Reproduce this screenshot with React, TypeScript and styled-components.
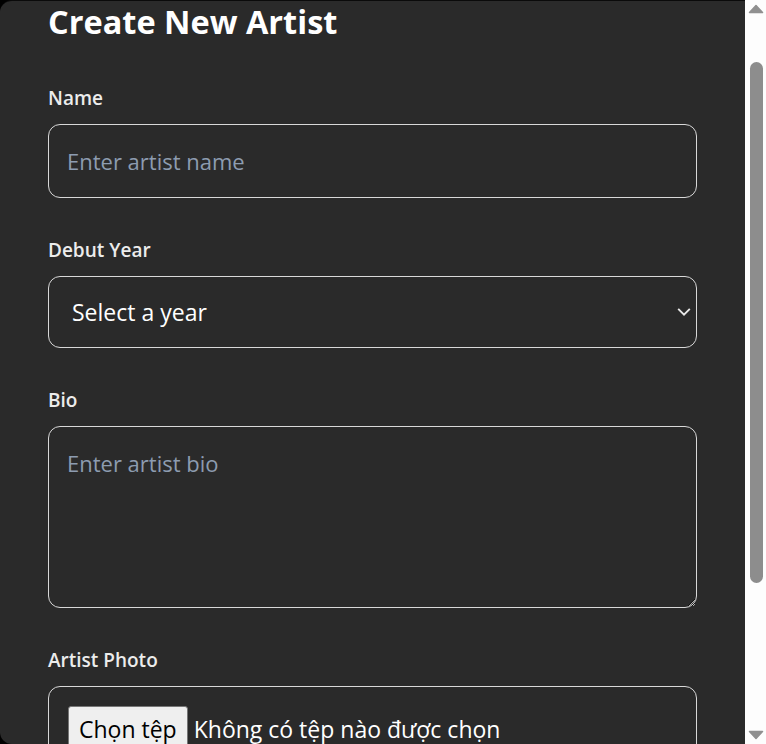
import React, { useLayoutEffect, useRef } from "react";
import styled, { createGlobalStyle } from "styled-components";

const Global = createGlobalStyle`
  html, body { margin: 0; padding: 0; background: #000; overflow: hidden; }
  * { box-sizing: border-box; }
`;

const Screen = styled.div`
  display: flex;
  width: 766px;
  height: 744px;
`;

const Panel = styled.div`
  flex: 1;
  height: 744px;
  overflow-y: auto;
  scrollbar-width: none;
  background: #2a2a2a;
  border-top: 1px solid #0a0a0a;
  border-radius: 12px 0 0 12px;
  font-family: "Open Sans", "Noto Sans", sans-serif;
  color: #fff;
  &::-webkit-scrollbar { display: none; }
`;

const Rail = styled.div`
  width: 21px;
  height: 744px;
  background: #fdfdfd;
  display: flex;
  flex-direction: column;
  align-items: center;
`;

const ArrowButton = styled.svg`
  width: 21px;
  height: 17px;
  flex: none;
`;

const Track = styled.div`
  flex: 1;
  width: 100%;
  display: flex;
  justify-content: center;
  padding-top: 45px;
`;

const Thumb = styled.div`
  width: 13px;
  height: 521px;
  margin-left: 1px;
  border-radius: 7px;
  background: #8d8d8d;
`;

const Form = styled.form`
  display: flex;
  flex-direction: column;
  padding: 65px 48px 168px;
`;

const Title = styled.h2`
  margin: 0 0 44px;
  font-size: 32.5px;
  line-height: 40px;
  font-weight: 700;
  color: #fff;
`;

const Field = styled.div`
  display: flex;
  flex-direction: column;
  gap: 13px;
  margin-bottom: 40px;
`;

const Label = styled.label`
  font-size: 19px;
  line-height: 25px;
  font-weight: 600;
  color: #ececec;
`;

const boxBase = `
  width: 100%;
  background: transparent;
  border: 1px solid #d8d8d8;
  border-radius: 12px;
  color: #fff;
  font-family: "Open Sans", "Noto Sans", sans-serif;
  font-size: 22px;
  outline: none;
`;

const TextInput = styled.input`
  ${boxBase}
  height: 74px;
  padding: 0 18px;
  &::placeholder { color: #8d9cb0; }
`;

const SelectWrap = styled.div`
  position: relative;
`;

const Select = styled.select`
  ${boxBase}
  font-size: 23px;
  height: 72px;
  padding: 0 23px;
  appearance: none;
  -webkit-appearance: none;
  option { background: #2a2a2a; color: #fff; }
`;

const Chevron = styled.svg`
  position: absolute;
  right: 6px;
  top: 31px;
  width: 14px;
  height: 10px;
  pointer-events: none;
`;

const TextArea = styled.textarea`
  ${boxBase}
  height: 182px;
  padding: 22px 18px;
  resize: vertical;
  line-height: 1.3;
  &::placeholder { color: #8d9cb0; }
`;

const FileBox = styled.div`
  ${boxBase}
  height: 74px;
  padding: 19px 19px;
  display: flex;
  align-items: flex-start;
  gap: 6px;
`;

const HiddenFile = styled.input`
  display: none;
`;

const FileButton = styled.label`
  height: 46px;
  padding: 0 10px;
  display: flex;
  align-items: center;
  background: #efefef;
  border: 1px solid #767676;
  border-radius: 3px;
  color: #000;
  font-size: 23px;
  cursor: pointer;
`;

const FileText = styled.span`
  line-height: 46px;
  font-size: 23px;
  color: #fff;
`;

export default function App() {
  const ref = useRef<HTMLDivElement>(null);
  useLayoutEffect(() => {
    if (ref.current) ref.current.scrollTop = 64;
  }, []);
  const years = Array.from({ length: 60 }, (_, i) => 2025 - i);
  return (
    <>
      <Global />
      <Screen>
        <Panel ref={ref}>
          <Form onSubmit={(e) => e.preventDefault()}>
            <Title>Create New Artist</Title>
            <Field>
              <Label htmlFor="name">Name</Label>
              <TextInput id="name" placeholder="Enter artist name" />
            </Field>
            <Field>
              <Label htmlFor="year">Debut Year</Label>
              <SelectWrap>
                <Select id="year" defaultValue="">
                  <option value="">Select a year</option>
                  {years.map((y) => (
                    <option key={y} value={y}>{y}</option>
                  ))}
                </Select>
                <Chevron viewBox="0 0 14 10">
                  <path d="M1.2 1.8 L7 7.6 L12.8 1.8" fill="none" stroke="#e8e8e8" strokeWidth="1.9" />
                </Chevron>
              </SelectWrap>
            </Field>
            <Field>
              <Label htmlFor="bio">Bio</Label>
              <TextArea id="bio" placeholder="Enter artist bio" />
            </Field>
            <Field>
              <Label htmlFor="photo">Artist Photo</Label>
              <FileBox>
                <HiddenFile id="photo" type="file" accept="image/*" />
                <FileButton htmlFor="photo">Chọn tệp</FileButton>
                <FileText>Không có tệp nào được chọn</FileText>
              </FileBox>
            </Field>
          </Form>
        </Panel>
        <Rail aria-hidden>
          <ArrowButton viewBox="0 0 21 17">
            <path d="M4.5 12.5 L11 5.5 L17.5 12.5 Z" fill="#909090" stroke="#909090" strokeLinejoin="round" strokeWidth="1.5" />
          </ArrowButton>
          <Track>
            <Thumb />
          </Track>
          <ArrowButton viewBox="0 0 21 17">
            <path d="M4.5 4.5 L11 11.5 L17.5 4.5 Z" fill="#909090" stroke="#909090" strokeLinejoin="round" strokeWidth="1.5" />
          </ArrowButton>
        </Rail>
      </Screen>
    </>
  );
}
